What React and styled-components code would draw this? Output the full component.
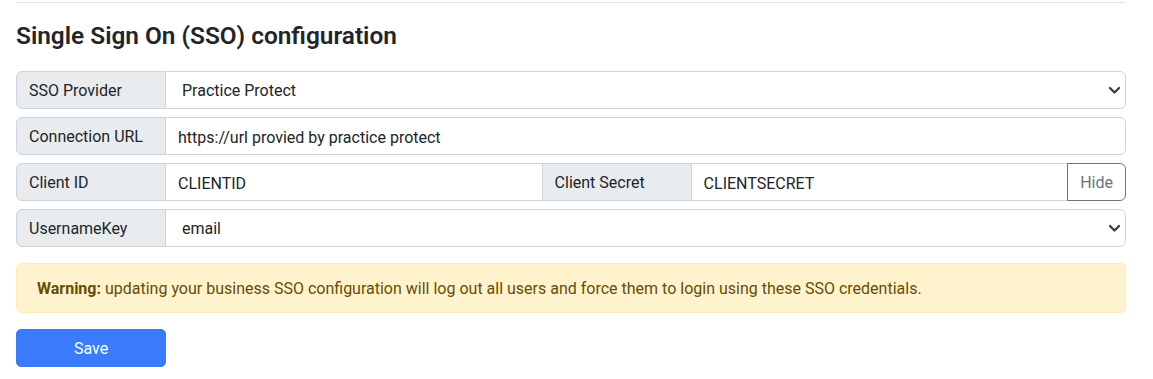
import React, { useState } from "react";
import styled, { createGlobalStyle } from "styled-components";

const GlobalStyle = createGlobalStyle`
  body {
    margin: 0;
    background: #fff;
    color: #212529;
    font-family: Roboto, "Liberation Sans", sans-serif;
    font-size: 16px;
    line-height: 1.5;
  }
`;

const Page = styled.div`
  padding: 0 27px 0 16px;
`;

const Rule = styled.hr`
  margin: 2px 0 0;
  border: 0;
  border-top: 1px solid #e3e3e3;
`;

const Title = styled.h4`
  margin: 18px 0 21px;
  font-size: 24.4px;
  font-weight: 600;
  line-height: 1.2;
  color: #212529;
`;

const Fields = styled.div`
  display: flex;
  flex-direction: column;
  gap: 8px;
`;

const InputGroup = styled.div`
  display: flex;
  height: 38px;

  & > * + * {
    margin-left: -1px;
  }
  & > :first-child {
    border-radius: 6px 0 0 6px;
  }
  & > :last-child {
    border-radius: 0 6px 6px 0;
  }
`;

const Addon = styled.span`
  box-sizing: border-box;
  flex: 0 0 150px;
  display: flex;
  align-items: center;
  padding: 2px 12px 0;
  background: #e9ecef;
  border: 1px solid #ced4da;
  color: #212529;
  white-space: nowrap;
`;

const TextInput = styled.input`
  box-sizing: border-box;
  flex: 1 1 0;
  min-width: 0;
  padding: 8px 12px 4px;
  border: 1px solid #ced4da;
  background: #fff;
  color: #212529;
  font: inherit;
  outline: none;
`;

const SelectBox = styled.div`
  position: relative;
  flex: 1 1 0;
  display: flex;
  border: 1px solid #ced4da;
  background: #fff;
`;

const Select = styled.select`
  flex: 1;
  appearance: none;
  border: 0;
  background: transparent;
  padding: 2px 36px 0 16px;
  color: #212529;
  font: inherit;
  outline: none;
`;

const Chevron = styled.svg`
  position: absolute;
  right: 4px;
  top: 14px;
  pointer-events: none;
`;

const OutlineButton = styled.button`
  box-sizing: border-box;
  position: relative;
  z-index: 2;
  padding: 2px 12px 0;
  background: #fff;
  border: 1px solid #6c757d;
  color: #6c757d;
  font: inherit;
  cursor: pointer;
`;

const Alert = styled.div`
  margin-top: 16px;
  padding: 13px 20px 11px;
  background: #fff3cd;
  border: 1px solid #ffecb5;
  border-radius: 6px;
  color: #664d03;

  strong {
    font-weight: 700;
  }
`;

const SaveButton = styled.button`
  margin-top: 16px;
  width: 150px;
  height: 38px;
  padding: 2px 0 0;
  background: #3a7bfd;
  border: 1px solid #3a7bfd;
  border-radius: 5px;
  color: #fff;
  font: inherit;
  cursor: pointer;
`;

const SelectField = ({ value, options }) => (
  <SelectBox>
    <Select defaultValue={value}>
      {options.map((o) => (
        <option key={o}>{o}</option>
      ))}
    </Select>
    <Chevron width="13" height="9" viewBox="0 0 13 9">
      <path d="m2 2 4.5 4.5L11 2" fill="none" stroke="#343a40" strokeWidth="2.2" strokeLinecap="round" strokeLinejoin="round" />
    </Chevron>
  </SelectBox>
);

const App = () => {
  const [showSecret, setShowSecret] = useState(true);

  return (
    <Page>
      <GlobalStyle />
      <Rule />
      <Title>Single Sign On (SSO) configuration</Title>
      <Fields>
        <InputGroup>
          <Addon>SSO Provider</Addon>
          <SelectField value="Practice Protect" options={["Practice Protect", "Azure AD", "Okta"]} />
        </InputGroup>
        <InputGroup>
          <Addon>Connection URL</Addon>
          <TextInput defaultValue="https://url provied by practice protect" />
        </InputGroup>
        <InputGroup>
          <Addon>Client ID</Addon>
          <TextInput defaultValue="CLIENTID" />
          <Addon>Client Secret</Addon>
          <TextInput type={showSecret ? "text" : "password"} defaultValue="CLIENTSECRET" />
          <OutlineButton onClick={() => setShowSecret(!showSecret)}>
            {showSecret ? "Hide" : "Show"}
          </OutlineButton>
        </InputGroup>
        <InputGroup>
          <Addon>UsernameKey</Addon>
          <SelectField value="email" options={["email", "username"]} />
        </InputGroup>
      </Fields>
      <Alert>
        <strong>Warning:</strong> updating your business SSO configuration will log out all users and force them to login using these SSO credentials.
      </Alert>
      <SaveButton>Save</SaveButton>
    </Page>
  );
};

export default App;
